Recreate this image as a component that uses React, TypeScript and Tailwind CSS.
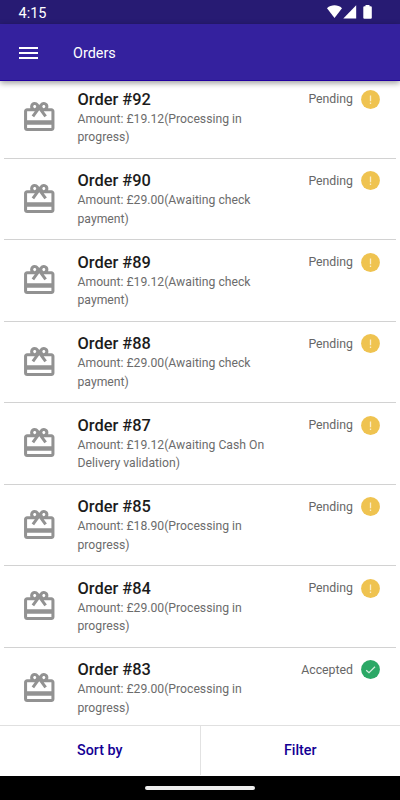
import { MdCardGiftcard } from "react-icons/md";

type Order = {
  id: number;
  amount: string;
  state: string;
  accepted?: boolean;
};

const orders: Order[] = [
  { id: 92, amount: "19.12", state: "Processing in progress" },
  { id: 90, amount: "29.00", state: "Awaiting check payment" },
  { id: 89, amount: "19.12", state: "Awaiting check payment" },
  { id: 88, amount: "29.00", state: "Awaiting check payment" },
  { id: 87, amount: "19.12", state: "Awaiting Cash On Delivery validation" },
  { id: 85, amount: "18.90", state: "Processing in progress" },
  { id: 84, amount: "29.00", state: "Processing in progress" },
  { id: 83, amount: "29.00", state: "Processing in progress", accepted: true },
];

function StatusBar() {
  return (
    <div className="flex h-6 shrink-0 items-center bg-[#271b73] pl-[18.5px] pr-[27px] text-white">
      <span className="pt-[4px] text-[14.5px] leading-none">4:15</span>
      <svg className="ml-auto h-6 w-[46px]" viewBox="0 0 46 24" fill="currentColor">
        <path d="M0 8.2C4.2 4.4 10.8 4.4 15 8.2L7.5 18Z" />
        <path d="M29.2 5.3V18.6H16.3Z" />
        <path d="M38.5 5h4v1.2h1.2q1.1 0 1.1 1.1v10.4q0 1.1-1.1 1.1h-6.3q-1.1 0-1.1-1.1V7.3q0-1.1 1.1-1.1h1.1Z" />
      </svg>
    </div>
  );
}

function StatusIcon({ accepted }: { accepted?: boolean }) {
  return (
    <svg className="h-[19px] w-[19px] shrink-0" viewBox="0 0 19 19" fill="none">
      <circle cx="9.5" cy="9.5" r="9.4" fill={accepted ? "#2ba866" : "#efc350"} />
      {accepted ? (
        <path d="M5.2 10.2L8 12.7L14 6.8" stroke="#d5eee0" strokeWidth="1.2" />
      ) : (
        <path d="M9.5 5.6V11.2M9.5 12.5V13.9" stroke="#fbedca" strokeWidth="1.3" />
      )}
    </svg>
  );
}

function OrderRow({ order }: { order: Order }) {
  return (
    <li className="flex h-[81.5px] shrink-0 border-b border-[#d2d2d2]">
      <MdCardGiftcard className="ml-[16.5px] mt-[22.4px] size-[36.5px] shrink-0 text-[#929292]" />
      <div className="ml-[20.5px] mt-[11.8px] w-[200px]">
        <h2 className="pt-px text-[16.4px] font-medium leading-5 text-[#1c1c1c]">{`Order #${order.id}`}</h2>
        <p className="text-[12.2px] leading-[18.4px] text-[#6c6c6c]">
          {`Amount: £${order.amount}(${order.state})`}
        </p>
      </div>
      <div className="ml-auto mr-4 mt-[12.8px] flex h-[19px] items-center gap-2">
        <span className="text-[12.3px] text-[#666]">
          {order.accepted ? "Accepted" : "Pending"}
        </span>
        <StatusIcon accepted={order.accepted} />
      </div>
    </li>
  );
}

export default function App() {
  return (
    <div className="flex h-[800px] w-[400px] flex-col overflow-hidden bg-white font-[Roboto,sans-serif]">
      <StatusBar />
      <header className="z-10 flex h-[57px] shrink-0 items-center border-b border-[#2200a0] bg-[#34219e] pl-[19px] text-white shadow-[0_2px_6px_rgba(0,0,0,0.4)]">
        <button aria-label="Menu" className="mt-px flex w-[19px] flex-col gap-[3px]">
          <span className="h-0.5 bg-white" />
          <span className="h-0.5 bg-white" />
          <span className="h-0.5 bg-white" />
        </button>
        <h1 className="ml-[35px] mt-[3px] text-[14.4px]">Orders</h1>
      </header>
      <main className="min-h-0 flex-1 overflow-hidden">
        <ul className="-mt-1 flex flex-col px-1">
          {orders.map((order) => (
            <OrderRow key={order.id} order={order} />
          ))}
        </ul>
      </main>
      <footer className="z-10 flex h-[51px] shrink-0 border-t border-[#e0e0e0] bg-white pb-px text-[14.3px] font-medium text-[#130094]">
        <button className="flex-1 border-r border-[#e2e2e2]">Sort by</button>
        <button className="flex-1">Filter</button>
      </footer>
      <div className="flex h-6 shrink-0 items-center justify-center bg-black">
        <div className="h-1 w-[110px] rounded-full bg-[#eee]" />
      </div>
    </div>
  );
}
